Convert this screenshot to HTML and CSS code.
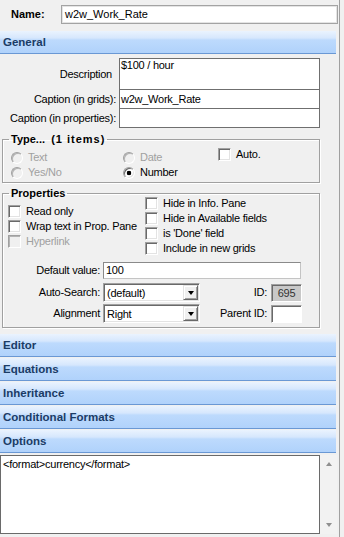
FILE: index.html
```html
<!DOCTYPE html>
<html>
<head>
<meta charset="utf-8">
<link rel="stylesheet" href="styles.css">
</head>
<body>
<div class="app">
  <div class="main">
    <div class="name-row">
      <span class="name-label">Name:</span>
      <div class="name-input">w2w_Work_Rate</div>
    </div>

    <div class="hdr">General</div>
    <div class="general">
      <div class="captions">
        <div class="cap-row">
          <span class="cap-label desc-label">Description</span>
          <div class="box desc-box">$100 / hour</div>
        </div>
        <div class="cap-row">
          <span class="cap-label">Caption (in grids):</span>
          <div class="box">w2w_Work_Rate</div>
        </div>
        <div class="cap-row">
          <span class="cap-label">Caption (in properties):</span>
          <div class="box"></div>
        </div>
      </div>

      <fieldset class="group type-group">
        <legend>Type...  <span class="wide">(1 items)</span></legend>
        <div class="type-grid">
          <div class="opt disabled"><span class="radio"></span>Text</div>
          <div class="opt disabled"><span class="radio"></span>Date</div>
          <div class="opt auto"><span class="check"></span>Auto.</div>
          <div class="opt disabled"><span class="radio"></span>Yes/No</div>
          <div class="opt"><span class="radio on"></span>Number</div>
        </div>
      </fieldset>

      <fieldset class="group prop-group">
        <legend>Properties</legend>
        <div class="prop-cols">
          <div class="col col-left">
            <div class="opt"><span class="check"></span>Read only</div>
            <div class="opt"><span class="check"></span>Wrap text in Prop. Pane</div>
            <div class="opt disabled"><span class="check"></span>Hyperlink</div>
          </div>
          <div class="col col-right">
            <div class="opt"><span class="check"></span>Hide in Info. Pane</div>
            <div class="opt"><span class="check"></span>Hide in Available fields</div>
            <div class="opt"><span class="check"></span>is 'Done' field</div>
            <div class="opt"><span class="check"></span>Include in new grids</div>
          </div>
        </div>
        <div class="frow frow-default">
          <span class="flabel">Default value:</span>
          <div class="input">100</div>
        </div>
        <div class="frow frow-search">
          <span class="flabel">Auto-Search:</span>
          <div class="select"><span class="val">(default)</span><span class="arrow"></span></div>
          <span class="idlabel">ID:</span>
          <div class="idbox ro">695</div>
        </div>
        <div class="frow frow-align">
          <span class="flabel">Alignment</span>
          <div class="select"><span class="val">Right</span><span class="arrow"></span></div>
          <span class="idlabel">Parent ID:</span>
          <div class="idbox"></div>
        </div>
      </fieldset>
    </div>

    <div class="hdr">Editor</div>
    <div class="hdr">Equations</div>
    <div class="hdr">Inheritance</div>
    <div class="hdr">Conditional Formats</div>
    <div class="hdr">Options</div>

    <div class="options">
      <div class="textarea">&lt;format&gt;currency&lt;/format&gt;</div>
      <div class="scrollbar">
        <span class="sarrow up"></span>
        <span class="sarrow down"></span>
      </div>
    </div>
  </div>
  <div class="edge"></div>
</div>
</body>
</html>
```

FILE: styles.css
```css
* {
  box-sizing: border-box;
}

html,
body {
  margin: 0;
  padding: 0;
}

body {
  background: #f0f0f0;
  font-family: "Liberation Sans", Arial, sans-serif;
  font-size: 11px;
  line-height: 13px;
  letter-spacing: -0.25px;
  color: #000;
}

.app {
  display: flex;
  height: 537px;
  overflow: hidden;
}

.main {
  width: 339px;
  flex: none;
}

.edge {
  width: 5px;
  flex: none;
  border-left: 1px solid #a0a0a0;
}

/* Name row */
.name-row {
  display: flex;
  align-items: center;
  padding: 5px 0 0 11px;
  margin-bottom: 7px;
}

.name-label {
  width: 50px;
  font-weight: bold;
  letter-spacing: 0;
}

.name-input {
  width: 277px;
  height: 19px;
  background: #fff;
  border: 1px solid #a3a3a3;
  box-shadow: inset 0 0 0 1px #e4e4e4;
  padding: 2px 3px;
  letter-spacing: 0;
}

/* Section headers */
.hdr {
  width: 336px;
  height: 23px;
  border-bottom: 1px solid #6a98d4;
  background: linear-gradient(#eaf3fe 0px, #d6e7fd 7px, #bddafd 9px, #b0d2fb 22px);
  padding-left: 3px;
  font-family: "Liberation Sans", Arial, sans-serif;
  font-weight: bold;
  font-size: 11.5px;
  line-height: 22px;
  letter-spacing: 0;
  color: #1b3c66;
}

.hdr + .hdr {
  margin-top: 1px;
}

/* General panel */
.general {
  padding: 4px 0 6px;
}

.cap-row {
  display: flex;
  align-items: center;
}

.cap-row + .cap-row {
  margin-top: -1px;
}

.cap-label {
  width: 116px;
  margin-right: 3px;
  text-align: right;
  white-space: nowrap;
}

.desc-label {
  padding-right: 4px;
}

.box {
  width: 201px;
  height: 20px;
  background: #fff;
  border: 1px solid #6f6f6f;
  padding: 0 1px;
  line-height: 18px;
  white-space: nowrap;
}

.desc-box {
  height: 32px;
  line-height: 13px;
  padding-top: 0;
}

/* Group boxes */
.group {
  width: 318px;
  margin: 0 0 0 2px;
  border: 1px solid #a0a0a0;
  box-shadow: inset 1px 1px 0 #fff, 1px 1px 0 #fff;
  min-width: 0;
}

.group legend {
  font-weight: bold;
  line-height: 13px;
  padding: 0 2px;
  letter-spacing: 0;
  white-space: pre;
}

.wide {
  letter-spacing: 1px;
}

.type-group {
  margin-top: 5px;
  padding: 4px 0 2px 8px;
}

.type-group legend {
  margin-left: -2px;
}

.type-grid {
  display: grid;
  grid-template-columns: 112px 95px 1fr;
  grid-auto-rows: 15px;
}

.opt {
  display: flex;
  align-items: center;
  gap: 5px;
  white-space: nowrap;
}

.opt.disabled {
  color: #a0a0a0;
}

.opt.auto {
  align-self: start;
  margin-top: -2px;
  height: 13px;
}

.radio {
  width: 12px;
  height: 12px;
  flex: none;
  border-radius: 50%;
  background: #fff;
  border: 1px solid;
  border-color: #a0a0a0 #fff #fff #a0a0a0;
  box-shadow: inset 1px 1px 0 #696969, inset -1px -1px 0 #e3e3e3;
}

.opt.disabled .radio {
  background: #f0f0f0;
  box-shadow: inset 1px 1px 0 #b4b4b4;
}

.radio.on {
  background: radial-gradient(circle, #000 0 2px, #fff 2.6px);
}

.check {
  width: 13px;
  height: 13px;
  flex: none;
  background: #fff;
  border: 1px solid;
  border-color: #a0a0a0 #fff #fff #a0a0a0;
  box-shadow: inset 1px 1px 0 #696969, inset -1px -1px 0 #e3e3e3;
}

.opt.disabled .check {
  background: #f0f0f0;
  box-shadow: inset 1px 1px 0 #b4b4b4;
}

/* Properties */
.prop-group {
  margin-top: 4px;
  padding: 0 0 4px 5px;
}

.prop-group legend {
  margin-left: 1px;
}

.prop-cols {
  display: grid;
  grid-template-columns: 137px 1fr;
  align-items: start;
}

.col {
  display: grid;
  grid-auto-rows: 15px;
}

.col-left {
  padding-top: 4px;
}

.col-right {
  margin-top: -4px;
}

.frow {
  display: flex;
  align-items: center;
}

.frow-default {
  margin-top: 6px;
  height: 17px;
}

.frow-search {
  margin-top: 4px;
  height: 19px;
}

.frow-align {
  margin-top: 2px;
  height: 19px;
}

.flabel {
  width: 92px;
  margin-right: 3px;
  text-align: right;
  white-space: nowrap;
}

.input {
  width: 198px;
  height: 17px;
  background: #fff;
  border: 1px solid;
  border-color: #8a8a8a #c4c4c4 #c4c4c4 #8a8a8a;
  padding: 1px 2px;
}

.select {
  display: flex;
  width: 97px;
  height: 19px;
  background: #fff;
  border: 1px solid;
  border-color: #a0a0a0 #fff #fff #a0a0a0;
  box-shadow: inset 1px 1px 0 #696969, inset -1px -1px 0 #e3e3e3;
  padding: 1px;
}

.select .val {
  flex: 1;
  padding: 2px 0 0 2px;
  white-space: nowrap;
}

.arrow {
  width: 15px;
  flex: none;
  display: flex;
  align-items: center;
  justify-content: center;
  background: #f0f0f0;
  border: 1px solid;
  border-color: #e3e3e3 #696969 #696969 #e3e3e3;
  box-shadow: inset 1px 1px 0 #fff, inset -1px -1px 0 #a0a0a0;
}

.arrow::after {
  content: "";
  border-left: 3.5px solid transparent;
  border-right: 3.5px solid transparent;
  border-top: 4px solid #000;
}

.idlabel {
  width: 67px;
  margin-right: 4px;
  text-align: right;
  white-space: nowrap;
}

.idbox {
  width: 31px;
  height: 18px;
  background: #fff;
  border: 1px solid;
  border-color: #a0a0a0 #fff #fff #a0a0a0;
  box-shadow: inset 1px 1px 0 #696969;
  text-align: center;
  line-height: 16px;
}

.idbox.ro {
  background: #c8c8c8;
  color: #333;
}

/* Options */
.options {
  display: flex;
  margin-top: 2px;
  width: 337px;
  height: 79px;
}

.textarea {
  width: 320px;
  height: 79px;
  background: #fff;
  border: 1px solid #6a6a6a;
  padding: 2px 2px;
  white-space: nowrap;
}

.scrollbar {
  width: 17px;
  height: 79px;
  background: #f2f2f2;
  display: flex;
  flex-direction: column;
  align-items: center;
  justify-content: space-between;
  padding: 7px 0 7px;
}

.sarrow {
  width: 0;
  height: 0;
  border-left: 3.5px solid transparent;
  border-right: 3.5px solid transparent;
}

.sarrow.up {
  border-bottom: 4px solid #8f8f8f;
}

.sarrow.down {
  border-top: 4px solid #8f8f8f;
}
```
